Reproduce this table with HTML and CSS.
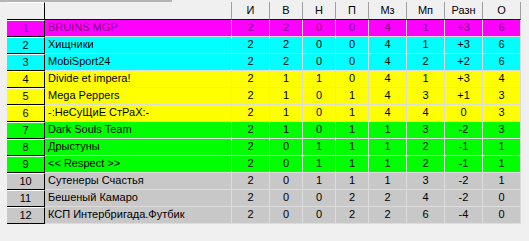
FILE: index.html
```html
<!DOCTYPE html>
<html>
<head>
<meta charset="utf-8">
<link rel="stylesheet" href="styles.css">
</head>
<body>
<div class="topbar"></div>
<div class="grid">
  <div class="row head"><div class="fx"></div><div class="h"></div><div class="h">И</div><div class="h">В</div><div class="h">Н</div><div class="h">П</div><div class="h">Мз</div><div class="h">Мп</div><div class="h">Разн</div><div class="h">О</div></div>
  <div class="row magenta"><div class="fx">1</div><div class="c name">BRUINS MGP</div><div class="c">2</div><div class="c">2</div><div class="c">0</div><div class="c">0</div><div class="c">4</div><div class="c">1</div><div class="c">+3</div><div class="c">6</div></div>
  <div class="row cyan"><div class="fx">2</div><div class="c name">Хищники</div><div class="c">2</div><div class="c">2</div><div class="c">0</div><div class="c">0</div><div class="c">4</div><div class="c">1</div><div class="c">+3</div><div class="c">6</div></div>
  <div class="row cyan"><div class="fx">3</div><div class="c name">MobiSport24</div><div class="c">2</div><div class="c">2</div><div class="c">0</div><div class="c">0</div><div class="c">4</div><div class="c">2</div><div class="c">+2</div><div class="c">6</div></div>
  <div class="row yellow"><div class="fx">4</div><div class="c name">Divide et impera!</div><div class="c">2</div><div class="c">1</div><div class="c">1</div><div class="c">0</div><div class="c">4</div><div class="c">1</div><div class="c">+3</div><div class="c">4</div></div>
  <div class="row yellow"><div class="fx">5</div><div class="c name">Mega Peppers</div><div class="c">2</div><div class="c">1</div><div class="c">0</div><div class="c">1</div><div class="c">4</div><div class="c">3</div><div class="c">+1</div><div class="c">3</div></div>
  <div class="row yellow"><div class="fx">6</div><div class="c name">-:НеСуЩиЕ СтРаХ:-</div><div class="c">2</div><div class="c">1</div><div class="c">0</div><div class="c">1</div><div class="c">4</div><div class="c">4</div><div class="c">0</div><div class="c">3</div></div>
  <div class="row green"><div class="fx">7</div><div class="c name">Dark Souls Team</div><div class="c">2</div><div class="c">1</div><div class="c">0</div><div class="c">1</div><div class="c">1</div><div class="c">3</div><div class="c">-2</div><div class="c">3</div></div>
  <div class="row green"><div class="fx">8</div><div class="c name">Дрыстуны</div><div class="c">2</div><div class="c">0</div><div class="c">1</div><div class="c">1</div><div class="c">1</div><div class="c">2</div><div class="c">-1</div><div class="c">1</div></div>
  <div class="row green"><div class="fx">9</div><div class="c name">&lt;&lt; Respect &gt;&gt;</div><div class="c">2</div><div class="c">0</div><div class="c">1</div><div class="c">1</div><div class="c">1</div><div class="c">2</div><div class="c">-1</div><div class="c">1</div></div>
  <div class="row gray"><div class="fx">10</div><div class="c name">Сутенеры Счастья</div><div class="c">2</div><div class="c">0</div><div class="c">1</div><div class="c">1</div><div class="c">1</div><div class="c">3</div><div class="c">-2</div><div class="c">1</div></div>
  <div class="row gray"><div class="fx">11</div><div class="c name">Бешеный Камаро</div><div class="c">2</div><div class="c">0</div><div class="c">0</div><div class="c">2</div><div class="c">2</div><div class="c">4</div><div class="c">-2</div><div class="c">0</div></div>
  <div class="row gray"><div class="fx">12</div><div class="c name">КСП Интербригада.Футбик</div><div class="c">2</div><div class="c">0</div><div class="c">0</div><div class="c">2</div><div class="c">2</div><div class="c">6</div><div class="c">-4</div><div class="c">0</div></div>
</div>
</body>
</html>
```
FILE: styles.css
```css
html, body {
  margin: 0;
  padding: 0;
  background: #f0f0f0;
}
body {
  font-family: "Liberation Sans", Arial, sans-serif;
  font-size: 11px;
  color: #000;
  width: 529px;
  height: 241px;
  overflow: hidden;
}
.topbar {
  width: 172px;
  height: 2px;
  background: #b4b4b4;
}
.grid {
  margin-left: 7px;
  width: 514px;
}
.row {
  display: grid;
  grid-template-columns: 38px 187px 38px 33px 33px 33px 38px 38px 38px 38px;
  height: 17px;
}
.row > div {
  box-sizing: border-box;
  line-height: 15px;
  text-align: center;
  white-space: nowrap;
  overflow: hidden;
}
.head {
  height: 18px;
}
.head .h {
  background: #f0f0f0;
  border-right: 1px solid #a0a0a0;
  border-bottom: 1px solid #000;
  line-height: 17px;
}
.head .fx {
  background: #f0f0f0;
  border-right: 1px solid #000;
  border-bottom: 1px solid #000;
}
.fx {
  border-top: 1px solid #fff;
  border-right: 1px solid #000;
  border-bottom: 1px solid #000;
}
.c {
  border-right: 1px solid #dcdcdc;
  border-bottom: 1px solid #dcdcdc;
  line-height: 16px;
}
.c.name {
  text-align: left;
  padding-left: 3px;
}
.magenta > div { background: #ff00ff; color: #800080; }
.cyan > div { background: #00ffff; }
.yellow > div { background: #ffff00; }
.green > div { background: #00ff00; }
.gray > div { background: #c8c8c8; }
```
